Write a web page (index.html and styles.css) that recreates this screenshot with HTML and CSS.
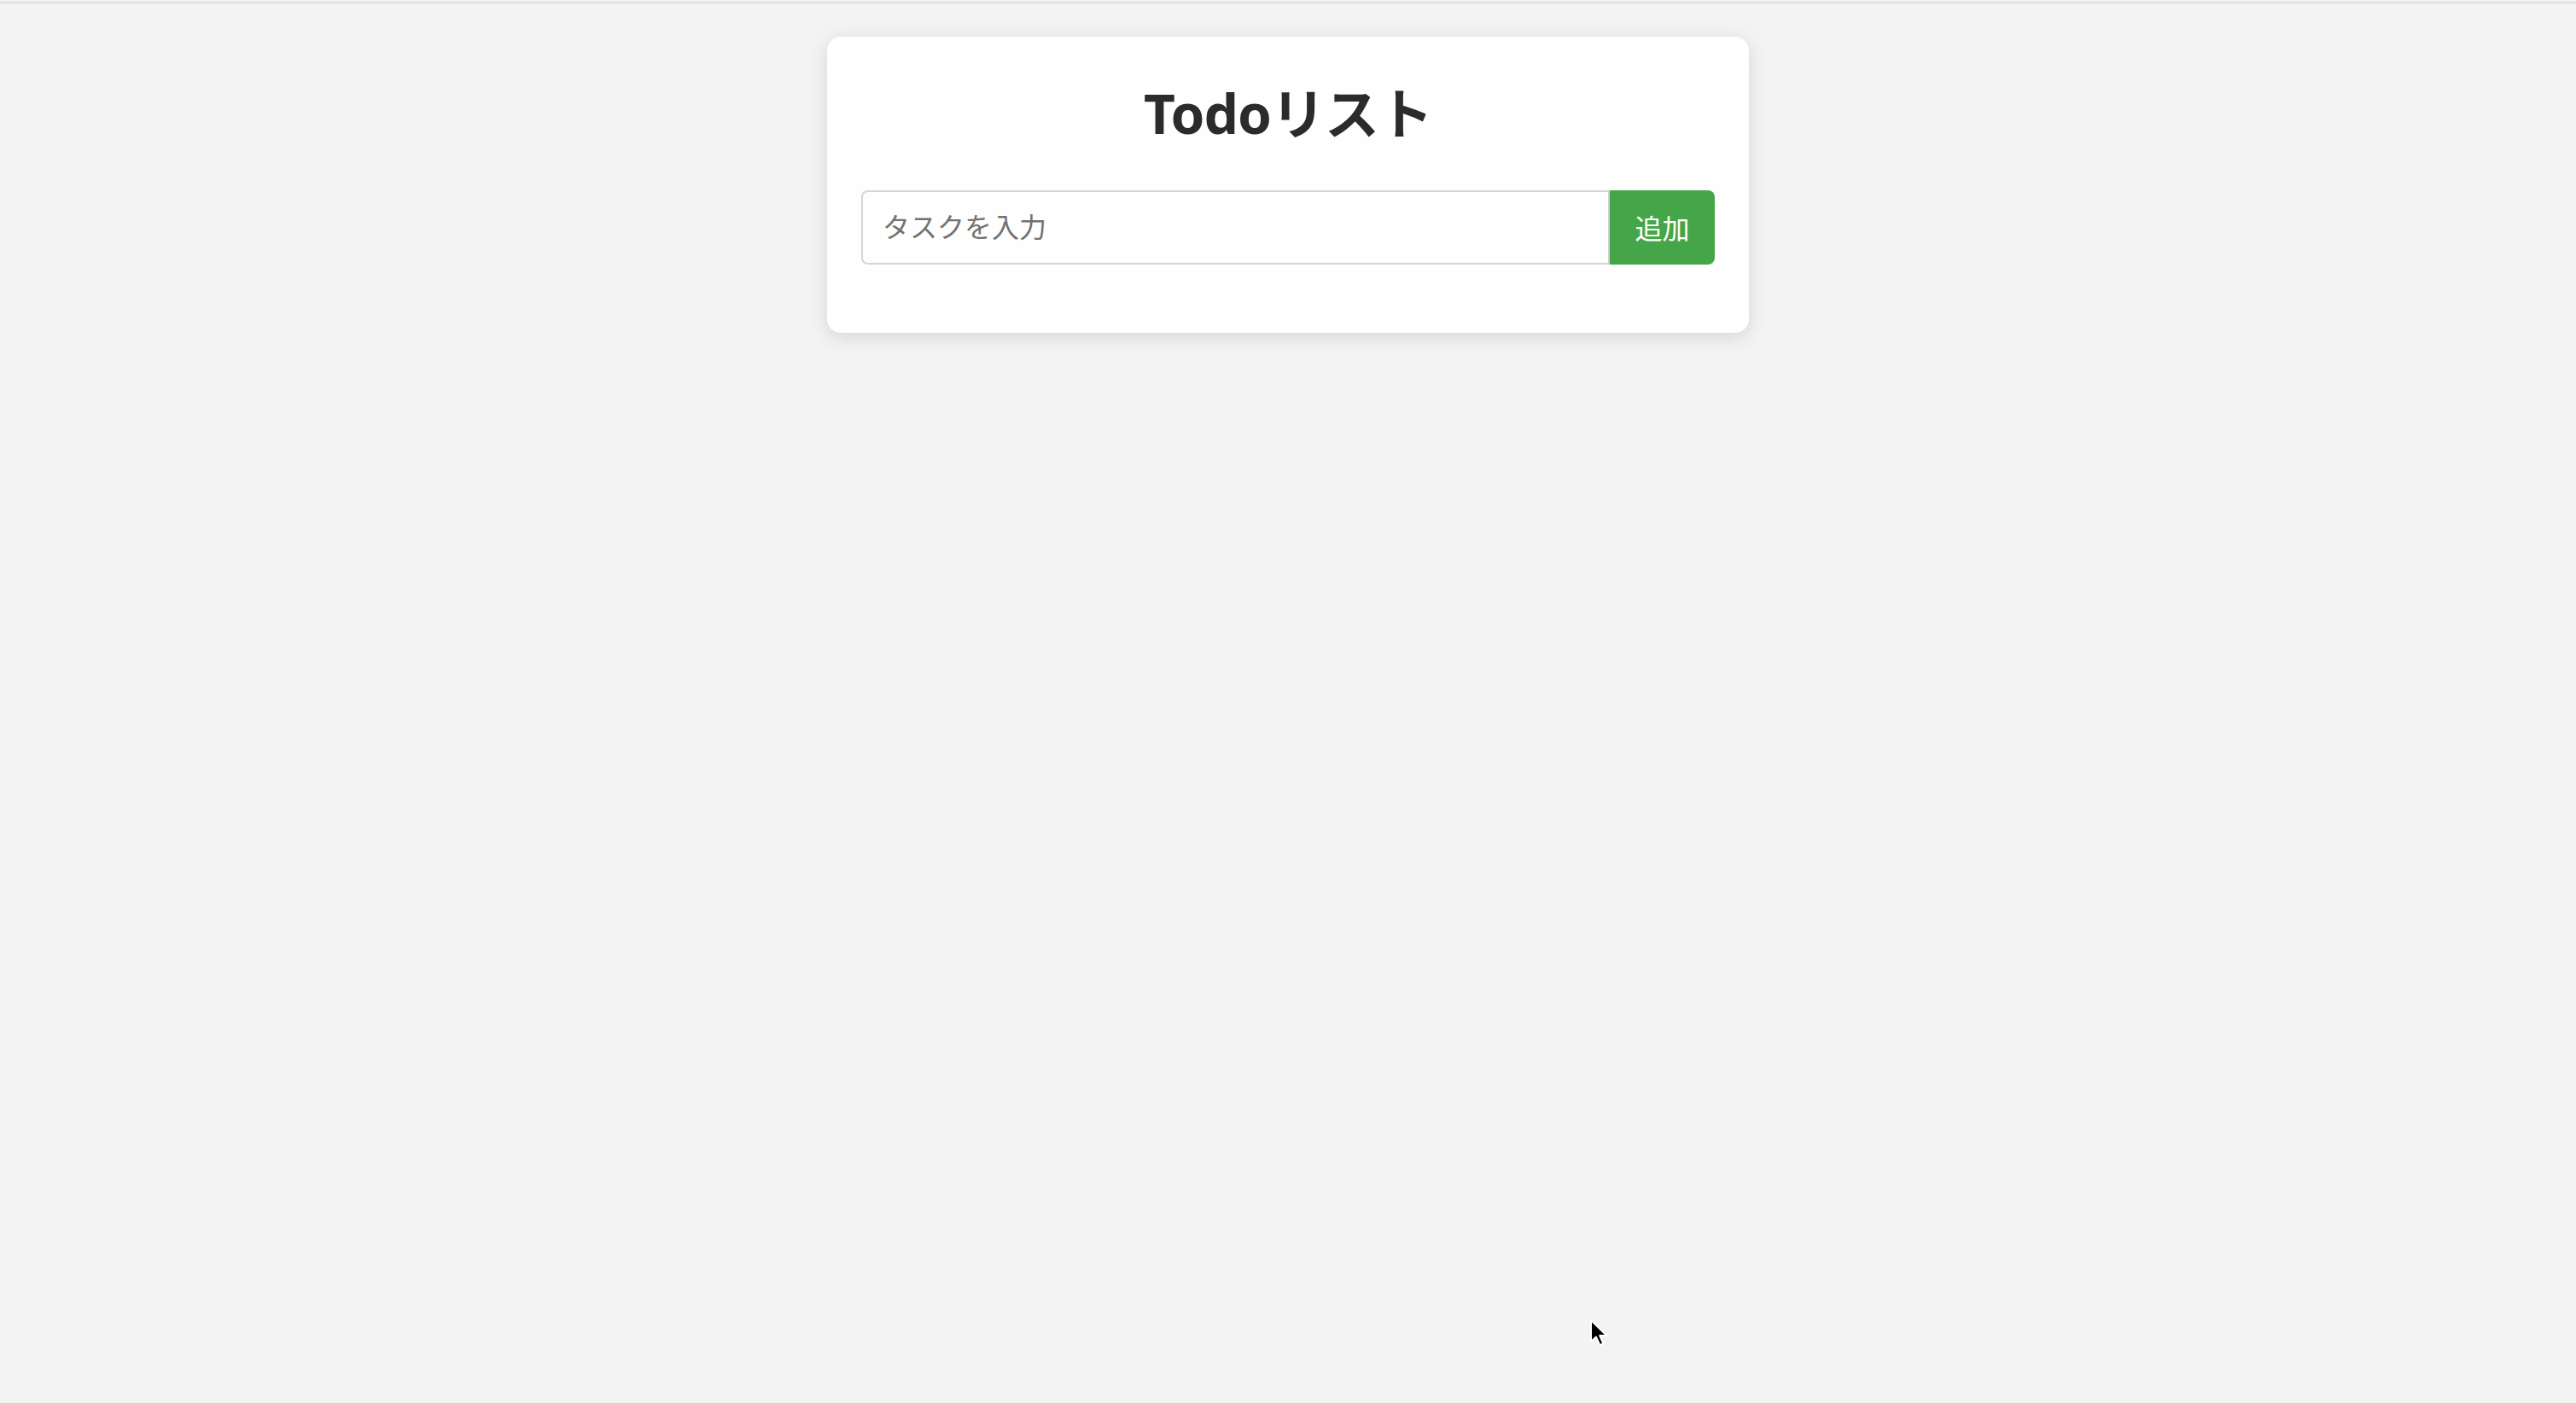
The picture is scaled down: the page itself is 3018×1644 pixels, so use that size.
FILE: index.html
```html
<!DOCTYPE html>
<html lang="ja">
<head>
<meta charset="utf-8">
<title>Todoリスト</title>
<link rel="stylesheet" href="styles.css">
</head>
<body>
<div class="topline"></div>
<main class="card">
  <h1 class="title">Todoリスト</h1>
  <form class="add-form" onsubmit="return false;">
    <input class="task-input" type="text" placeholder="タスクを入力">
    <button class="add-btn" type="submit">追加</button>
  </form>
  <ul class="task-list"></ul>
</main>
<svg class="cursor" width="26" height="34" viewBox="0 0 13 17" aria-hidden="true">
  <path d="M1 1 L1 13.5 L4 10.8 L6.2 15.6 L8.2 14.7 L6.1 10 L10.2 10 Z" fill="#000" stroke="#fff" stroke-width="1" stroke-linejoin="round"/>
</svg>
</body>
</html>
```
FILE: styles.css
```css
html {
  background: #f3f3f3;
}
body {
  margin: 0;
  padding: 2px 0 0;
  min-height: 100vh;
  box-sizing: border-box;
  background: #f3f3f3;
  font-family: "Noto Sans", "Noto Sans CJK JP", sans-serif;
}
.topline {
  height: 2px;
  background: #d6dee6;
}
.card {
  width: 1000px;
  margin: 39px auto 0;
  padding: 40px;
  background: #fefefe;
  border-radius: 16px;
  box-shadow: 0 5px 22px rgba(0, 0, 0, 0.12);
}
.title {
  margin: 0 0 40px;
  text-align: center;
  font-size: 64px;
  line-height: 100px;
  font-weight: 700;
  color: #2b2b2b;
  letter-spacing: -1px;
}
.add-form {
  display: flex;
  margin: 0;
}
.task-input {
  flex: 1;
  height: 87px;
  box-sizing: border-box;
  padding: 0 22px 6px 23px;
  border: 2px solid #d6d6d6;
  border-right: none;
  border-radius: 8px 0 0 8px;
  font-family: "Noto Sans CJK JP", sans-serif;
  font-size: 32px;
  color: #333;
  background: #fefefe;
  outline: none;
}
.task-input::placeholder {
  color: #727272;
}
.add-btn {
  width: 125px;
  height: 87px;
  border: none;
  border-radius: 0 8px 8px 0;
  background: #44a648;
  color: #fff;
  font-family: "Noto Sans CJK JP", sans-serif;
  font-size: 32px;
  padding: 0 0 2px;
  border-left: 2px solid #d0d0d0;
}
.task-list {
  list-style: none;
  margin: 40px 0 0;
  padding: 0;
}
.cursor {
  position: absolute;
  left: 1862px;
  top: 1545px;
}
```
